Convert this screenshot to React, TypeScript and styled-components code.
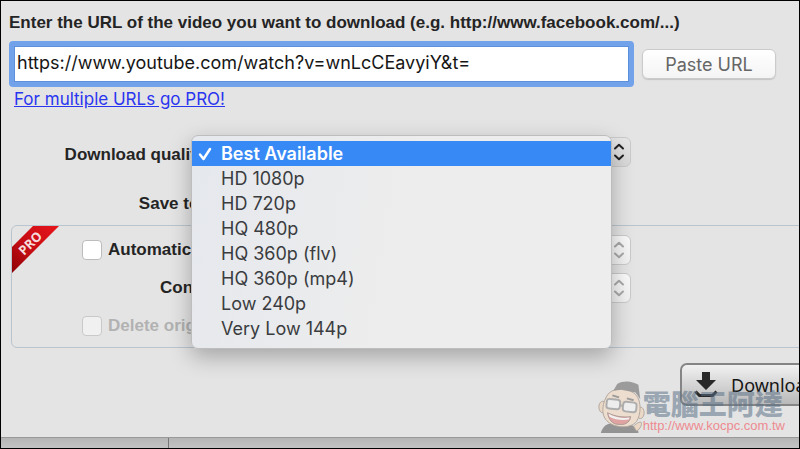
import React, { useState } from "react";
import styled, { createGlobalStyle, css } from "styled-components";

const GlobalStyle = createGlobalStyle`
  *, *::before, *::after { box-sizing: border-box; }
  body {
    margin: 0;
    background: #e4e4e4;
    color: #242424;
    font-family: "Liberation Sans", Arial, sans-serif;
  }
`;

const system = css`
  font-family: Inter, "Noto Sans", sans-serif;
`;

const Window = styled.div`
  position: relative;
  display: flex;
  flex-direction: column;
  min-height: 100vh;
  overflow: hidden;
  border: 1px solid #000;
  background: #e4e4e4;
`;

const Form = styled.form`
  flex: 1;
  display: flex;
  flex-direction: column;
  padding: 10px 0 0 8px;
`;

const boldLabel = css`
  font-size: 17px;
  font-weight: 700;
  line-height: 24px;
  white-space: nowrap;
`;

const Heading = styled.label`
  ${boldLabel}
`;

const UrlRow = styled.div`
  display: flex;
  align-items: center;
  gap: 8px;
  margin-top: 6px;
  padding-right: 23px;
`;

const UrlInput = styled.input`
  ${system}
  flex: 1;
  min-width: 0;
  height: 46px;
  padding: 0 3px 3px;
  border: 5px solid #72a3ea;
  border-radius: 4px;
  outline: none;
  background: #fff;
  box-shadow: inset 0 0 0 1px #5c8fdc;
  color: #161616;
  font-size: 18px;
`;

const PasteButton = styled.button`
  ${system}
  width: 134px;
  height: 30px;
  border: 1px solid #cbcbcb;
  border-radius: 6px;
  background: linear-gradient(#fff, #f4f4f4);
  box-shadow: 0 1px 1px #c4c4c4;
  color: #666;
  font-size: 18px;
`;

const ProLink = styled.a`
  ${system}
  align-self: flex-start;
  margin-left: 5px;
  color: #2a35f0;
  font-size: 17px;
  line-height: 24px;
  white-space: nowrap;
`;

const Field = styled.div`
  position: relative;
  display: grid;
  grid-template-columns: 208px 1fr;
  align-items: center;
  height: 30px;
`;

const QualityField = styled(Field)`
  margin-top: 26px;
  z-index: 1;
`;

const SaveField = styled(Field)`
  margin-top: 20px;
`;

const FieldLabel = styled.label`
  ${boldLabel}
  justify-self: end;
  padding: 6px 6px 0 0;
`;

const SaveLabel = styled.span`
  ${boldLabel}
  justify-self: end;
  padding: 4px 12px 0 0;
`;

const Picker = styled.div`
  position: relative;
  width: 436px;
  height: 30px;
`;

const QualityPicker = styled(Picker)`
  margin-left: -22px;
`;

const pickerBox = css`
  ${system}
  display: block;
  width: 100%;
  height: 30px;
  padding: 0 32px 0 20px;
  border: 1px solid #cacaca;
  border-radius: 6px;
  font-size: 18px;
  text-align: left;
`;

const PickerButton = styled.button`
  ${pickerBox}
  background: linear-gradient(#e6e6e6, #d9d9d9);
  color: #242424;
`;

const PickerSelect = styled.select`
  ${pickerBox}
  appearance: none;
  opacity: 1;
  background: linear-gradient(#fafafa, #f0f0f0);
  color: #a8a8a8;
`;

const Arrows = styled.svg<{ $dim?: boolean }>`
  position: absolute;
  top: 6px;
  right: 6px;
  width: 12px;
  height: 18px;
  fill: none;
  stroke: ${(p) => (p.$dim ? "#a9a9a9" : "#222")};
  stroke-width: 2;
  stroke-linecap: round;
  stroke-linejoin: round;
  pointer-events: none;
`;

const Menu = styled.ul`
  ${system}
  position: absolute;
  top: -2px;
  left: -4px;
  width: 421px;
  margin: 0;
  padding: 5px 0 7px;
  list-style: none;
  overflow: hidden;
  border: 1px solid #bdbdbd;
  border-radius: 7px;
  background: linear-gradient(100deg, #e5e8ed, #ededed 50%);
  box-shadow: 0 8px 22px rgba(0, 0, 0, 0.28);
`;

const MenuItem = styled.li<{ $active: boolean }>`
  display: grid;
  grid-template-columns: 29px 1fr;
  align-items: center;
  height: 25px;
  color: ${(p) => (p.$active ? "#fff" : "#3a3c3f")};
  background: ${(p) => (p.$active ? "#378af5" : "transparent")};
  font-size: 18px;
  font-weight: ${(p) => (p.$active ? 600 : 400)};
  white-space: nowrap;
  cursor: default;
`;

const Tick = styled.svg`
  width: 14px;
  height: 14px;
  margin-left: 6px;
  fill: none;
  stroke: #fff;
  stroke-width: 2.5;
  stroke-linecap: round;
  stroke-linejoin: round;
`;

const ProGroup = styled.section`
  position: relative;
  display: flex;
  flex-direction: column;
  gap: 8px;
  height: 123px;
  margin: 8px -16px 0 2px;
  padding-top: 9px;
  border: 1px solid #b9c5ce;
  border-radius: 6px;
`;

const Ribbon = styled.svg`
  position: absolute;
  top: 0;
  left: 0;
  width: 48px;
  height: 48px;
`;

const ProRow = styled.div`
  display: grid;
  grid-template-columns: 183px 1fr;
  align-items: center;
  height: 30px;
`;

const CheckLabel = styled.label<{ $dim?: boolean }>`
  ${boldLabel}
  display: flex;
  align-items: center;
  gap: 6px;
  padding-left: 70px;
  color: ${(p) => (p.$dim ? "#b2b2b2" : "inherit")};
`;

const Checkbox = styled.input`
  appearance: none;
  flex: none;
  width: 20px;
  height: 20px;
  margin: 0;
  border: 1px solid #bcbcbc;
  border-radius: 4px;
  background: #fff;
  &:disabled {
    border-color: #c9c9c9;
    background: #f0f0f0;
  }
`;

const InnerLabel = styled.label`
  ${boldLabel}
  padding-left: 148px;
`;

const Actions = styled.div`
  display: flex;
  justify-content: flex-end;
  margin: 15px -60px 0 0;
`;

const DownloadButton = styled.button`
  display: flex;
  align-items: center;
  gap: 12px;
  width: 179px;
  height: 43px;
  padding: 0 12px;
  border: 2px solid #858585;
  border-radius: 7px;
  background: linear-gradient(#f1f1f1, #b9b9b9);
  color: #161616;
  font-family: "Noto Sans", sans-serif;
  font-size: 18px;
`;

const Backdrop = styled.footer`
  display: grid;
  grid-template-columns: 168px 1fr;
  height: 11px;
  border-top: 1px solid #999;
  background: linear-gradient(#b5b5b5, #c3c3c3);
`;

const BackdropPane = styled.div`
  border-right: 1px solid #777;
`;

const Watermark = styled.aside`
  position: absolute;
  right: 14px;
  bottom: 15px;
  z-index: 2;
  display: flex;
  align-items: flex-end;
  pointer-events: none;
`;

const Mascot = styled.svg`
  width: 48px;
  height: 52px;
  opacity: 0.5;
`;

const Brand = styled.div`
  display: flex;
  flex-direction: column;
  margin-left: -3px;
`;

const BrandName = styled.span`
  color: rgba(90, 112, 135, 0.55);
  font-family: "Noto Sans CJK TC", sans-serif;
  font-size: 28px;
  font-weight: 900;
  line-height: 30px;
  white-space: nowrap;
`;

const BrandUrl = styled.span`
  color: #ee8a90;
  font-size: 13px;
  line-height: 15px;
  white-space: nowrap;
`;

const qualities = [
  "Best Available",
  "HD 1080p",
  "HD 720p",
  "HQ 480p",
  "HQ 360p (flv)",
  "HQ 360p (mp4)",
  "Low 240p",
  "Very Low 144p",
];

function UpDown({ dim }: { dim?: boolean }) {
  return (
    <Arrows $dim={dim} viewBox="0 0 12 18" aria-hidden="true">
      <path d="M2 5.5 6 1.8l4 3.7M2 12.5l4 3.7 4-3.7" />
    </Arrows>
  );
}

function DownloadIcon() {
  return (
    <svg width="25" height="28" viewBox="0 0 25 28" aria-hidden="true">
      <path d="M8 1h8v8h6L12 19 2 9h6z" fill="#292929" />
      <path d="M1.500 20.500l4 4h13l4-4" fill="none" stroke="#292929" strokeWidth="3" />
    </svg>
  );
}

function Face() {
  return (
    <Mascot viewBox="0 0 48 54" aria-hidden="true">
      <path d="M2 54c2-8 8-11 16-10l16 2c5 1 7 4 7 8z" fill="#444" />
      <path d="M36 47c3-3 6-5 8-4 1 2-1 7-5 9z" fill="#f0cba8" stroke="#806a58" />
      <ellipse cx="4" cy="27" rx="4" ry="6" fill="#f3cfae" stroke="#806a58" />
      <ellipse cx="43" cy="33" rx="4" ry="6" fill="#f3cfae" stroke="#806a58" />
      <path d="M10 13C3 22 2 35 8 41c7 8 25 9 31 1 5-7 5-21 0-27C32 7 17 6 10 13z" fill="#f7d7b9" stroke="#806a58" />
      <path d="M15 10l4-7c7-4 16-3 22 1l2 15-5-7-15-3z" fill="#555" />
      <path d="M14 15l7 2M29 18l7 2" stroke="#555" strokeWidth="2" />
      <g fill="#f7f7f7" stroke="#777" strokeWidth="2">
        <rect x="8" y="19" width="14" height="10" rx="3" transform="rotate(6 15 24)" />
        <rect x="25" y="22" width="14" height="10" rx="3" transform="rotate(6 32 27)" />
        <path d="M22 25l3 1" />
      </g>
      <path d="M9 33c8 4 16 5 24 4-1 7-7 9-13 8-6 0-10-5-11-12z" fill="#dc6560" stroke="#735146" />
      <path d="M10 34c8 4 15 5 22 4l-1 2c-8 1-14 0-20-3z" fill="#fff" />
    </Mascot>
  );
}

export default function App() {
  const [url, setUrl] = useState("https://www.youtube.com/watch?v=wnLcCEavyiY&t=");
  const [quality, setQuality] = useState(qualities[0]);
  const [open, setOpen] = useState(true);

  return (
    <>
      <GlobalStyle />
      <Window>
        <Form onSubmit={(e) => e.preventDefault()}>
          <Heading htmlFor="url">
            Enter the URL of the video you want to download (e.g. http://www.facebook.com/...)
          </Heading>
          <UrlRow>
            <UrlInput id="url" type="text" value={url} onChange={(e) => setUrl(e.target.value)} />
            <PasteButton type="button">Paste URL</PasteButton>
          </UrlRow>
          <ProLink href="#pro">For multiple URLs go PRO!</ProLink>

          <QualityField>
            <FieldLabel htmlFor="quality">Download quality:</FieldLabel>
            <QualityPicker>
              <PickerButton
                id="quality"
                type="button"
                aria-haspopup="listbox"
                aria-expanded={open}
                onClick={() => setOpen(!open)}
              >
                {!open && quality}
              </PickerButton>
              <UpDown />
              {open && (
                <Menu role="listbox" aria-label="Download quality">
                  {qualities.map((name) => (
                    <MenuItem
                      key={name}
                      role="option"
                      aria-selected={name === quality}
                      $active={name === quality}
                      onClick={() => {
                        setQuality(name);
                        setOpen(false);
                      }}
                    >
                      {name === quality ? (
                        <Tick viewBox="0 0 14 14" aria-hidden="true">
                          <path d="M2 7.5 5.5 12 12 2" />
                        </Tick>
                      ) : (
                        <span />
                      )}
                      {name}
                    </MenuItem>
                  ))}
                </Menu>
              )}
            </QualityPicker>
          </QualityField>

          <SaveField>
            <SaveLabel>Save to:</SaveLabel>
          </SaveField>

          <ProGroup aria-label="PRO">
            <Ribbon viewBox="0 0 48 48">
              <defs>
                <linearGradient id="ribbon" x1="0" y1="1" x2="1" y2="0">
                  <stop offset="0" stopColor="#8d0006" />
                  <stop offset="0.4" stopColor="#c20d14" />
                  <stop offset="1" stopColor="#e8151b" />
                </linearGradient>
              </defs>
              <path d="M0 21 21 0h26L0 47z" fill="url(#ribbon)" />
              <text
                x="18"
                y="22"
                transform="rotate(-45 18 17)"
                textAnchor="middle"
                fill="#f6dcdc"
                fontFamily="Open Sans, sans-serif"
                fontSize="13"
                fontWeight="700"
              >
                PRO
              </text>
            </Ribbon>
            <ProRow>
              <CheckLabel>
                <Checkbox type="checkbox" />
                Automatically
              </CheckLabel>
              <Picker>
                <PickerSelect disabled aria-label="Automatic action" />
                <UpDown dim />
              </Picker>
            </ProRow>
            <ProRow>
              <InnerLabel htmlFor="convert">Convert</InnerLabel>
              <Picker>
                <PickerSelect id="convert" disabled />
                <UpDown dim />
              </Picker>
            </ProRow>
            <ProRow>
              <CheckLabel $dim>
                <Checkbox type="checkbox" disabled />
                Delete original
              </CheckLabel>
            </ProRow>
          </ProGroup>

          <Actions>
            <DownloadButton type="submit">
              <DownloadIcon />
              Download
            </DownloadButton>
          </Actions>
        </Form>
        <Backdrop>
          <BackdropPane />
        </Backdrop>
        <Watermark>
          <Face />
          <Brand>
            <BrandName>電腦王阿達</BrandName>
            <BrandUrl>http://www.kocpc.com.tw</BrandUrl>
          </Brand>
        </Watermark>
      </Window>
    </>
  );
}
